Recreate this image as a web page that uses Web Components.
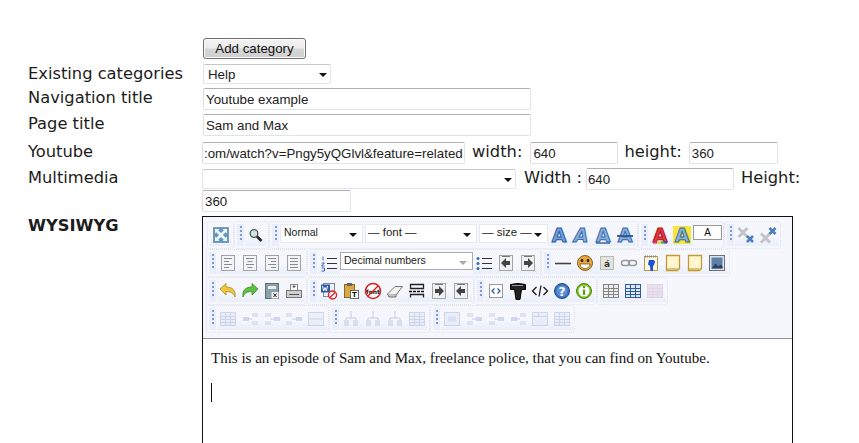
<!DOCTYPE html>
<html>
<head>
<meta charset="utf-8">
<title>Edit page</title>
<style>
  html, body { margin: 0; height: 443px; overflow: hidden; background: #fff; }
  body { font: 16.3px/18px "DejaVu Sans", sans-serif; color: #1c1c1c; }
</style>
</head>
<body>
<edit-form>
  <form-row style="height:26px"><push-button>Add category</push-button></form-row>
  <form-row label="Existing categories" style="height:24px"><drop-list width="128" value="Help"></drop-list></form-row>
  <form-row label="Navigation title" style="height:26px"><text-field width="328">Youtube example</text-field></form-row>
  <form-row label="Page title" style="height:28px"><text-field width="328">Sam and Max</text-field></form-row>
  <form-row label="Youtube" style="height:26px;margin-left:-1px">
    <text-field width="263" flush>:om/watch?v=Pngy5yQGlvl&amp;feature=related</text-field>
    <field-label style="margin:0 8px 0 7px">width:</field-label>
    <text-field width="88">640</text-field>
    <field-label style="margin:0 7px 0 6px">height:</field-label>
    <text-field width="89">360</text-field>
  </form-row>
  <form-row label="Multimedia" style="height:48px;margin-left:-1px">
    <drop-list width="314" value="" style="margin-top:1px"></drop-list>
    <field-label style="margin:0 4px 0 8px">Width :</field-label>
    <text-field width="148" flush>640</text-field>
    <field-label style="margin:0 0 0 7px">Height:</field-label>
    <text-field width="149">360</text-field>
  </form-row>
  <form-row label="WYSIWYG" strong style="margin-left:-1px">
    <wysiwyg-editor>
      <p>This is an episode of Sam and Max, freelance police, that you can find on Youtube.</p>
    </wysiwyg-editor>
  </form-row>
</edit-form>

<script>
class EditForm extends HTMLElement {
  constructor() {
    super();
    this.attachShadow({ mode: 'open' });
    this.shadowRoot.innerHTML = `
      <style>
        :host { display: block; padding: 38px 0 0 28px; }
      </style>
      <slot></slot>
    `;
  }
}

class FormRow extends HTMLElement {
  constructor() {
    super();
    this.attachShadow({ mode: 'open' });
  }

  connectedCallback() {
    const strong = this.hasAttribute('strong');
    this.shadowRoot.innerHTML = `
      <style>
        :host { display: grid; grid-template-columns: 175px 640px; }
        .label { padding-top: 1px; font-weight: ${strong ? 'bold' : 'normal'}; white-space: nowrap; }
        .controls { display: flex; flex-wrap: wrap; align-items: flex-start; align-content: flex-start; }
      </style>
      <div class="label">${this.getAttribute('label') || ''}</div>
      <div class="controls"><slot></slot></div>
    `;
    if (this.style.marginLeft) {
      this.shadowRoot.querySelector('.label').style.marginLeft = '1px';
    }
  }
}

class FieldLabel extends HTMLElement {
  constructor() {
    super();
    this.attachShadow({ mode: 'open' });
    this.shadowRoot.innerHTML = `
      <style>
        :host { display: block; padding-top: 1px; white-space: nowrap; }
      </style>
      <slot></slot>
    `;
  }
}

class PushButton extends HTMLElement {
  constructor() {
    super();
    this.attachShadow({ mode: 'open' });
    this.shadowRoot.innerHTML = `
      <style>
        :host {
          display: block;
          box-sizing: border-box;
          width: 103px;
          height: 21px;
          border: 1px solid #707070;
          border-radius: 3px;
          background: linear-gradient(#f3f3f3 0, #ebebeb 48%, #d6d6d6 52%, #cfcfcf 100%);
          box-shadow: inset 0 0 0 1px #fafafa;
          font: 13.3px/19px "Liberation Sans", sans-serif;
          color: #111;
          text-align: center;
        }
      </style>
      <slot></slot>
    `;
  }
}

class TextField extends HTMLElement {
  constructor() {
    super();
    this.attachShadow({ mode: 'open' });
  }

  connectedCallback() {
    const width = this.getAttribute('width');
    const flush = this.hasAttribute('flush');
    this.shadowRoot.innerHTML = `
      <style>
        :host {
          display: block;
          box-sizing: border-box;
          width: ${width}px;
          height: 22px;
          padding: 0 ${flush ? 0 : 2}px 0 ${flush ? 1 : 2}px;
          border: 1px solid #e0e3ea;
          border-top-color: #aeb0b6;
          border-left-color: #dcdee4;
          border-radius: 2px;
          overflow: hidden;
          font: 13.3px/21px "Liberation Sans", sans-serif;
          color: #222;
          white-space: nowrap;
        }
      </style>
      <slot></slot>
    `;
  }
}

class DropList extends HTMLElement {
  constructor() {
    super();
    this.attachShadow({ mode: 'open' });
  }

  connectedCallback() {
    this.shadowRoot.innerHTML = `
      <style>
        :host {
          display: flex;
          justify-content: space-between;
          box-sizing: border-box;
          width: ${this.getAttribute('width')}px;
          height: 20px;
          padding: 0 3px 0 4px;
          border: 1px solid #e0e3ea;
          border-top-color: #c4c6cc;
          border-radius: 2px;
          font: 13.3px/19px "Liberation Sans", sans-serif;
          color: #222;
        }
        i { align-self: center; width: 0; height: 0; margin-top: 1px; border: 4px solid transparent; border-top-color: #111; border-bottom: 0; }
      </style>
      <span>${this.getAttribute('value') || ''}</span><i></i>
    `;
  }
}

class WysiwygEditor extends HTMLElement {
  constructor() {
    super();
    this.attachShadow({ mode: 'open' });
    const group = (grip, items) => `<tool-group ${grip ? 'grip' : ''}>${items}</tool-group>`;
    const icons = (names, off) => names.split(' ').map(n => `<tool-icon name="${n}" ${off ? 'off' : ''}></tool-icon>`).join('');
    this.shadowRoot.innerHTML = `
      <style>
        :host {
          display: block;
          box-sizing: border-box;
          width: 591px;
          height: 400px;
          border: 1px solid #111;
          background: #fff;
        }
        .toolbar {
          height: 122px;
          box-sizing: border-box;
          padding: 4px 0 0 3px;
          background: #f5f7fd;
          border-bottom: 1px solid #8f8f98;
        }
        .line { display: flex; height: 28px; }
        .line.first { margin-left: 1px; }
        .body {
          padding: 10px 8px;
          font: 15px/18px "Liberation Serif", serif;
          color: #111;
        }
        ::slotted(p) { margin: 0 0 16px; }
        .caret { width: 1px; height: 19px; background: #111; }
      </style>
      <div class="toolbar">
        <div class="line first">
          ${group(false, icons('full'))}
          ${group(true, icons('zoom'))}
          ${group(true, `<tool-select width="83">Normal</tool-select><tool-select width="112" wide style="margin-left:2px">— font —</tool-select><tool-select width="69" wide style="margin-left:2px">— size —</tool-select>` + icons('bold italic under strike'))}
          ${group(true, icons('color hilite') + '<tool-swatch>A</tool-swatch>')}
          ${group(true, icons('sub sup'))}
        </div>
        <div class="line">
          ${group(true, icons('left center right justify'))}
          ${group(true, icons('numbers') + '<tool-select width="133" boxed>Decimal numbers</tool-select>' + icons('bullets outdent indent'))}
          ${group(true, icons('hr smile acute link foot note note image'))}
        </div>
        <div class="line">
          ${group(true, icons('undo redo saveas print'))}
          ${group(true, icons('word clip nofont erase pagebreak indent outdent'))}
          ${group(true, icons('source bigt code help info'))}
          ${group(false, icons('table bluetable') + icons('pinktable', true))}
        </div>
        <div class="line">
          ${group(true, icons('tbl rowafter rowbefore rowdel rowsplit', true))}
          ${group(true, icons('colleft colright coldel tbl', true))}
          ${group(true, icons('cell cellbefore cellafter celldel merge split', true))}
        </div>
      </div>
      <div class="body">
        <slot></slot>
        <div class="caret"></div>
      </div>
    `;
  }
}

class ToolGroup extends HTMLElement {
  constructor() {
    super();
    this.attachShadow({ mode: 'open' });
  }

  connectedCallback() {
    this.shadowRoot.innerHTML = `
      <style>
        :host {
          display: flex;
          align-items: center;
          box-sizing: border-box;
          height: 28px;
          padding: 0 1px 0 2px;
          border: 1px dotted #dfe2ec;
          border-radius: 4px;
        }
        .grip {
          width: 7px;
          height: 22px;
          margin-right: 1px;
          background: #e9eefa;
          display: flex;
          justify-content: center;
        }
        .grip b {
          width: 2px;
          height: 16px;
          margin-top: 2px;
          background: repeating-linear-gradient(#7d99d8 0 2px, transparent 2px 4px);
        }
      </style>
      ${this.hasAttribute('grip') ? '<div class="grip"><b></b></div>' : ''}
      <slot></slot>
    `;
  }
}

class ToolSelect extends HTMLElement {
  constructor() {
    super();
    this.attachShadow({ mode: 'open' });
  }

  connectedCallback() {
    const boxed = this.hasAttribute('boxed');
    const wide = this.hasAttribute('wide');
    this.shadowRoot.innerHTML = `
      <style>
        :host {
          display: flex;
          justify-content: space-between;
          flex: none;
          box-sizing: border-box;
          width: ${this.getAttribute('width')}px;
          height: ${boxed ? 18 : 19}px;
          margin-top: -4px;
          padding: 0 5px 0 ${wide ? 2 : 3}px;
          background: #fff;
          border: 1px solid ${boxed ? '#a9abb2' : '#e6e9f2'};
          font: ${wide ? 11.5 : 10.5}px/14px "Liberation Sans", sans-serif;
          color: #222;
          white-space: nowrap;
        }
        i { align-self: center; margin-top: 3px; width: 0; height: 0; border: 4px solid transparent; border-top-color: ${boxed ? '#a8a8a8' : '#111'}; border-bottom: 0; }
      </style>
      <span><slot></slot></span><i></i>
    `;
  }
}

class ToolSwatch extends HTMLElement {
  constructor() {
    super();
    this.attachShadow({ mode: 'open' });
    this.shadowRoot.innerHTML = `
      <style>
        :host {
          display: block;
          box-sizing: border-box;
          width: 29px;
          height: 15px;
          margin-top: -5px;
          background: #fff;
          border: 1px solid #9a9a9a;
          font: 10px/13px "Liberation Sans", sans-serif;
          color: #111;
          text-align: center;
        }
      </style>
      <slot></slot>
    `;
  }
}

// little helpers for the 18x18 toolbar glyphs
const letter = (ch, fill, stroke, extra = '') =>
  `<text x="9" y="15.500" text-anchor="middle" font-family="DejaVu Sans" font-weight="bold" font-size="19" fill="${fill}" stroke="${stroke}" stroke-width="1" ${extra}>${ch}</text>`;
const rows = spec => spec.map(([x, y, w]) => `<path d="M${x} ${y}h${w}" stroke="#8b8b8b"/>`).join('');
const alignBox = spec => `<rect x="2.500" y="1.500" width="13" height="15" fill="#f3f4f7" stroke="#a2a2a6"/>` + rows(spec);
const arrowBox = dir => `<rect x="2.500" y="1.500" width="13" height="15" fill="#eef0f2" stroke="#a5a5a5"/><path d="M5 2.500h8" stroke="#777"/>` +
  (dir > 0 ? '<path d="M5 7h4V4l5 5-5 5v-3H5z" fill="#444"/>' : '<path d="M13 7H9V4L4 9l5 5v-3h4z" fill="#444"/>');
const tableBox = (line, fill) => `<rect x="1.500" y="2.500" width="15" height="13" fill="${fill}" stroke="${line}"/><path d="M1.500 6.500h15M1.500 9.500h15M1.500 12.500h15M6.500 2.500v13M11.500 2.500v13" stroke="${line}"/>`;
const rowMove = (a, b) => `<rect x="${a}" y="3" width="6" height="4" fill="#c5cde0"/><rect x="${a}" y="11" width="6" height="4" fill="#c5cde0"/><rect x="${b}" y="7" width="6" height="4" fill="#9db0d8"/><path d="M7 9h4" stroke="#8a97b8"/>`;
const colMove = `<path d="M9 1v7M4 10v-2h10v2" fill="none" stroke="#8a97b8"/><rect x="2" y="10" width="5" height="6" fill="#b9c4dc"/><rect x="11" y="10" width="5" height="6" fill="#b9c4dc"/>`;
const cross = (x, y, s, line, w) => `<path d="M${x} ${y}l${s} ${s}m0 -${s}l-${s} ${s}" stroke="${line}" stroke-width="${w}" fill="none"/>`;

const GLYPHS = {
  full: `<rect x="1.500" y="1.500" width="15" height="15" fill="#5f97c0" stroke="#7f9cb2"/><path d="M3 3h4.500L6.200 4.300 9 7.100l2.800-2.800L10.500 3H15v4.500l-1.300-1.300L10.900 9l2.800 2.800 1.300-1.300V15h-4.500l1.300-1.300L9 10.900l-2.800 2.800L7.500 15H3v-4.500l1.300 1.300L7.100 9 4.300 6.200 3 7.500z" fill="#f2f7fb"/>`,
  zoom: `<circle cx="7" cy="7.500" r="3.800" fill="#cfe6dc" stroke="#4c5a5c" stroke-width="1.300"/><path d="M10 10.500l4.500 4.500" stroke="#222" stroke-width="2.600"/>`,
  bold: letter('A', '#6f9fdc', '#2c5c9e'),
  italic: letter('A', '#88aee0', '#3a6aa8', 'font-style="italic"'),
  under: letter('A', '#88aee0', '#3a6aa8') + '<path d="M2 17h14" stroke="#2c5c9e" stroke-width="1.400"/>',
  strike: letter('A', '#88aee0', '#3a6aa8') + '<path d="M1 10h16" stroke="#1f4a85" stroke-width="1.600"/>',
  color: letter('A', '#e8343c', '#a81820') + '<path d="M2 16.500h4" stroke="#e5308a" stroke-width="2.200"/><path d="M6 16.500h4" stroke="#e8d020" stroke-width="2.200"/><path d="M10 16.500h3" stroke="#30b040" stroke-width="2.200"/><path d="M13 16.500h3" stroke="#3050d0" stroke-width="2.200"/>',
  hilite: '<rect x="0" y="0" width="18" height="18" fill="#f6e63c"/>' + letter('A', '#8fb3d8', '#3f6d90'),
  sub: cross(1.500, 2, 9, '#c2c4c9', 3) + cross(10, 10, 6, '#4d7ec0', 2.600),
  sup: cross(2, 7.500, 9, '#c2c4c9', 3) + cross(10.500, 2, 6, '#4d7ec0', 2.600),
  left: alignBox([[5, 4.500, 8], [5, 7.500, 5], [5, 10.500, 8], [5, 13.500, 5]]),
  center: alignBox([[5, 4.500, 8], [6.500, 7.500, 5], [5, 10.500, 8], [6.500, 13.500, 5]]),
  right: alignBox([[5, 4.500, 8], [8, 7.500, 5], [5, 10.500, 8], [8, 13.500, 5]]),
  justify: alignBox([[5, 4.500, 8], [5, 7.500, 8], [5, 10.500, 8], [5, 13.500, 8]]),
  numbers: `<path d="M3 2.500v4M1.500 9h3l-3 3h3M1.500 14h3v3h-3" fill="none" stroke="#3a68b0"/><path d="M7 4.500h10M7 9.500h10M7 14.500h10" stroke="#333" stroke-width="1.200"/>`,
  bullets: `<circle cx="3" cy="4.500" r="1.500" fill="#3a68b0"/><circle cx="3" cy="9.500" r="1.500" fill="#3a68b0"/><circle cx="3" cy="14.500" r="1.500" fill="#3a68b0"/><path d="M7 4.500h10M7 9.500h10M7 14.500h10" stroke="#333" stroke-width="1.200"/>`,
  outdent: arrowBox(-1),
  indent: arrowBox(1),
  hr: `<path d="M1 9.500h16" stroke="#444" stroke-width="1.600"/>`,
  smile: `<circle cx="9" cy="9" r="7.500" fill="#e8a840" stroke="#8c6218"/><ellipse cx="6" cy="6.500" rx="1.400" ry="1.800" fill="#3a2a10"/><ellipse cx="12" cy="6.500" rx="1.400" ry="1.800" fill="#3a2a10"/><path d="M4 10h10c0 3-2.500 4.500-5 4.500S4 13 4 10z" fill="#fff" stroke="#6a4a10" stroke-width=".7"/>`,
  acute: `<rect x="2.500" y="2.500" width="13" height="13" fill="#e4e4df" stroke="#b9b9b4"/><text x="9" y="12.500" text-anchor="middle" font-family="DejaVu Sans" font-weight="bold" font-size="9" fill="#333">á</text>`,
  link: `<rect x="1.500" y="6.500" width="8" height="5" rx="2.500" fill="none" stroke="#9a9a9f" stroke-width="1.500"/><rect x="8.500" y="6.500" width="8" height="5" rx="2.500" fill="none" stroke="#9a9a9f" stroke-width="1.500"/>`,
  foot: `<rect x="2.500" y="2.500" width="13" height="14" fill="#fdf8e4" stroke="#b89a50"/><path d="M3 2.500h12" stroke="#888" stroke-dasharray="1 1" stroke-width="2"/><path d="M7 6h5l1 2-1 3-1 1 0 5H8.500L8 12 6 10.500z" fill="#1f50d0"/>`,
  note: `<path d="M2.500 1.500h13v13l-2 2h-11z" fill="#fff6cf" stroke="#c09a38" stroke-width="1.300"/><path d="M3 15h11" stroke="#d8b450" stroke-width="1.500"/>`,
  image: `<rect x="1.500" y="1.500" width="15" height="15" fill="#dfe3ea" stroke="#6a6f78"/><rect x="3.500" y="3.500" width="11" height="11" fill="#5d7fa8"/><path d="M3.500 14.500l4-5 3 3 2-2 2 2v2z" fill="#2f4058"/>`,
  undo: `<path d="M1 7l6-5.500V5c6 0 10 3 9 10-1.500-4-4.500-5.500-9-5.500V13z" fill="#f0c83c" stroke="#a88a20" stroke-width=".8"/>`,
  redo: `<path d="M17 7l-6-5.500V5C5 5 1 8 2 15c1.500-4 4.500-5.500 9-5.500V13z" fill="#60c040" stroke="#3a8a28" stroke-width=".8"/>`,
  saveas: `<rect x="2.500" y="1.500" width="13" height="15" fill="#8ba0a8" stroke="#60707a"/><rect x="5" y="4" width="8" height="3" fill="#e8eef0"/><rect x="8.500" y="10" width="7" height="6.500" fill="#f0f0f0"/><path d="M10.500 11.500l3 3.500m0-3.500l-3 3.500" stroke="#222"/>`,
  print: `<rect x="5.500" y="2.500" width="7" height="6" fill="#fff" stroke="#888"/><path d="M9 3v3M7.500 4.500h3" stroke="#555"/><rect x="1.500" y="8.500" width="15" height="7" fill="#cfcfcf" stroke="#777"/><path d="M4 12.500h10" stroke="#555"/>`,
  word: `<rect x="3.500" y="1.500" width="11" height="13" fill="#eef2fa" stroke="#7a8aa8"/><rect x="1" y="2.500" width="9" height="8" fill="#2f5aa8"/><path d="M2.500 4l1.200 5 1.300-3.500L6.300 9l1.200-5" fill="none" stroke="#fff"/><circle cx="12.500" cy="13" r="4" fill="#fff" stroke="#d82020" stroke-width="1.400"/><path d="M10 15.500l5-5" stroke="#d82020" stroke-width="1.400"/>`,
  clip: `<rect x="2.500" y="2.500" width="10" height="13" fill="#d9a848" stroke="#8a6820"/><rect x="5" y="1" width="5" height="3" fill="#666"/><rect x="8.500" y="8.500" width="8" height="8" fill="#fff" stroke="#666"/><text x="12.500" y="15" text-anchor="middle" font-family="DejaVu Sans" font-weight="bold" font-size="7" fill="#111">T</text>`,
  nofont: `<circle cx="9" cy="9" r="7.500" fill="#fff" stroke="#d82020" stroke-width="1.600"/><text x="9" y="11.500" text-anchor="middle" font-family="DejaVu Sans" font-weight="bold" font-size="6" fill="#111">font</text><path d="M4 14L14 4" stroke="#d82020" stroke-width="1.400"/>`,
  erase: `<path d="M1.500 12L9 4.500h7.500L10 13H3z" fill="#f4f2ee" stroke="#777"/><path d="M1.500 12L3 15h7l0-2" fill="#c8c4bc" stroke="#777"/>`,
  pagebreak: `<path d="M2.500 2.500h13v4h-13zM2.500 15.500v-3h13v3" fill="none" stroke="#222" stroke-width="1.300"/><path d="M1 9.500h16" stroke="#111" stroke-width="1.400" stroke-dasharray="3 1"/>`,
  source: `<rect x="2.500" y="2.500" width="13" height="13" fill="#fff" stroke="#9a9a9a"/><path d="M7.500 6.500L5 9l2.500 2.500M10.500 6.500L13 9l-2.500 2.500" fill="none" stroke="#2f5aa8" stroke-width="1.300"/>`,
  bigt: `<path d="M1.500 2.500Q9 .5 16.500 2.500v5h-4l-1.500 10H7L5.500 7.500h-4z" fill="#222" stroke="#000"/><path d="M3 3.500h11" stroke="#999"/>`,
  code: `<path d="M5.500 5L1.500 9l4 4M12.500 5l4 4-4 4M10 3.500l-2 11" fill="none" stroke="#111" stroke-width="1.200"/>`,
  help: `<circle cx="9" cy="9" r="7.500" fill="#3a72c0" stroke="#1f4a88"/><circle cx="9" cy="9" r="5.500" fill="#5a8ed8"/><text x="9" y="13.500" text-anchor="middle" font-family="DejaVu Sans" font-weight="bold" font-size="12" fill="#fff">?</text>`,
  info: `<circle cx="9" cy="9" r="7.500" fill="#7cc020" stroke="#4a8a10"/><circle cx="9" cy="9" r="5.500" fill="#fff"/><path d="M9 7.500v5.500" stroke="#60a018" stroke-width="2.400"/><circle cx="9" cy="5" r="1.300" fill="#60a018"/>`,
  table: tableBox('#858585', '#eeeeee'),
  bluetable: tableBox('#2f5a9a', '#dfe8f6'),
  pinktable: tableBox('#c8b0c8', '#e0c8d8'),
  tbl: tableBox('#9db0d0', '#dbe4f4'),
  rowafter: rowMove(11, 2),
  rowbefore: rowMove(2, 11),
  rowdel: rowMove(1, 11),
  rowsplit: `<rect x="1.500" y="2.500" width="15" height="13" fill="#e0e6f4" stroke="#9db0d0"/><path d="M1.500 9h15" stroke="#9db0d0"/>`,
  colleft: colMove,
  colright: colMove,
  coldel: colMove,
  cell: `<rect x="1.500" y="2.500" width="15" height="13" fill="#dbe4f4" stroke="#9db0d0"/><rect x="5" y="6.500" width="8" height="5" fill="#b9c8e4"/>`,
  cellbefore: rowMove(2, 11),
  cellafter: rowMove(2, 11),
  celldel: rowMove(11, 2),
  merge: `<rect x="1.500" y="2.500" width="15" height="13" fill="#dbe4f4" stroke="#9db0d0"/><path d="M7.500 2.500v4M1.500 6.500h15" stroke="#9db0d0"/>`,
  split: tableBox('#9db0d0', '#dbe4f4')
};

class ToolIcon extends HTMLElement {
  constructor() {
    super();
    this.attachShadow({ mode: 'open' });
  }

  connectedCallback() {
    const off = this.hasAttribute('off');
    this.shadowRoot.innerHTML = `
      <style>
        :host {
          display: flex;
          align-items: center;
          justify-content: center;
          flex: none;
          width: 22px;
          height: 22px;
          background: linear-gradient(transparent 55%, #e9eefa);
        }
        svg { display: block; overflow: visible; opacity: ${off ? 0.45 : 1}; }
      </style>
      <svg width="18" height="18" viewBox="0 0 18 18">${GLYPHS[this.getAttribute('name')] || ''}</svg>
    `;
  }
}

customElements.define('edit-form', EditForm);
customElements.define('form-row', FormRow);
customElements.define('field-label', FieldLabel);
customElements.define('push-button', PushButton);
customElements.define('text-field', TextField);
customElements.define('drop-list', DropList);
customElements.define('wysiwyg-editor', WysiwygEditor);
customElements.define('tool-group', ToolGroup);
customElements.define('tool-select', ToolSelect);
customElements.define('tool-swatch', ToolSwatch);
customElements.define('tool-icon', ToolIcon);
</script>
</body>
</html>
